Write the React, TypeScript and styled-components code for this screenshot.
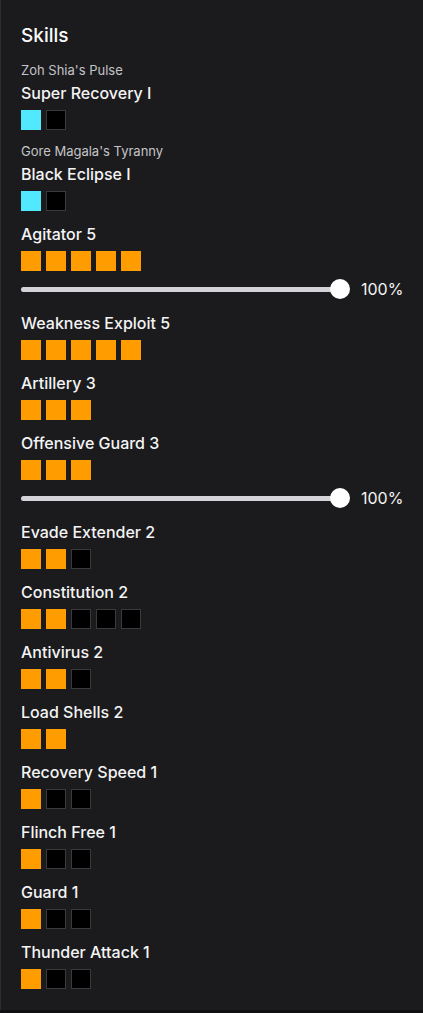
import styled, { createGlobalStyle } from 'styled-components';

type Skill = {
  source?: string;
  name: string;
  filled: number;
  total: number;
  kind: 'set' | 'normal';
  slider?: number;
};

const skills: Skill[] = [
  { source: "Zoh Shia's Pulse", name: 'Super Recovery I', filled: 1, total: 2, kind: 'set' },
  { source: "Gore Magala's Tyranny", name: 'Black Eclipse I', filled: 1, total: 2, kind: 'set' },
  { name: 'Agitator 5', filled: 5, total: 5, kind: 'normal', slider: 100 },
  { name: 'Weakness Exploit 5', filled: 5, total: 5, kind: 'normal' },
  { name: 'Artillery 3', filled: 3, total: 3, kind: 'normal' },
  { name: 'Offensive Guard 3', filled: 3, total: 3, kind: 'normal', slider: 100 },
  { name: 'Evade Extender 2', filled: 2, total: 3, kind: 'normal' },
  { name: 'Constitution 2', filled: 2, total: 5, kind: 'normal' },
  { name: 'Antivirus 2', filled: 2, total: 3, kind: 'normal' },
  { name: 'Load Shells 2', filled: 2, total: 2, kind: 'normal' },
  { name: 'Recovery Speed 1', filled: 1, total: 3, kind: 'normal' },
  { name: 'Flinch Free 1', filled: 1, total: 3, kind: 'normal' },
  { name: 'Guard 1', filled: 1, total: 3, kind: 'normal' },
  { name: 'Thunder Attack 1', filled: 1, total: 3, kind: 'normal' },
];

const App = () => {
  return (
    <>
      <GlobalStyle />
      <Panel>
        <Title>Skills</Title>
        <SkillList>
          {skills.map((skill) => (
            <SkillBlock key={skill.name}>
              <LabelGroup>
                {skill.source && <Source>{skill.source}</Source>}
                <Name>{skill.name}</Name>
              </LabelGroup>
              <Levels>
                {Array.from({ length: skill.total }).map((_, i) => (
                  <Level key={i} $state={i < skill.filled ? skill.kind : 'empty'} />
                ))}
              </Levels>
              {skill.slider !== undefined && (
                <SliderRow>
                  <Track>
                    <Fill style={{ width: `${skill.slider}%` }} />
                    <Thumb />
                  </Track>
                  <Percent>{skill.slider}%</Percent>
                </SliderRow>
              )}
            </SkillBlock>
          ))}
        </SkillList>
      </Panel>
    </>
  );
};

const GlobalStyle = createGlobalStyle`
  body {
    margin: 0;
    background: #101012;
    font-family: Inter, 'Noto Sans', sans-serif;
    color: #f4f4f5;
  }
`;

const Panel = styled.div`
  box-sizing: border-box;
  width: 423px;
  height: 1010px;
  padding: 25px 20px 20px 20px;
  background: #1b1b1d;
  border-left: 1px solid #2c2c2f;
  display: flex;
  flex-direction: column;
`;

const Title = styled.h2`
  margin: 0 0 15px 0;
  font-size: 19px;
  line-height: 22px;
  font-weight: 500;
  color: #fafafa;
`;

const SkillList = styled.div`
  display: flex;
  flex-direction: column;
  gap: 13px;
`;

const SkillBlock = styled.div`
  display: flex;
  flex-direction: column;
  gap: 7px;
`;

const LabelGroup = styled.div`
  display: flex;
  flex-direction: column;
  gap: 4px;
`;

const Source = styled.div`
  font-size: 13px;
  line-height: 17px;
  color: #c4c4c8;
`;

const Name = styled.div`
  font-size: 16px;
  line-height: 20px;
  font-weight: 500;
  color: #f4f4f5;
`;

const Levels = styled.div`
  display: flex;
  gap: 5px;
`;

const levelColors = {
  set: '#52e8ff',
  normal: '#ff9c00',
  empty: '#000000',
};

const Level = styled.div<{ $state: 'set' | 'normal' | 'empty' }>`
  box-sizing: border-box;
  width: 20px;
  height: 20px;
  background: ${(p) => levelColors[p.$state]};
  border: ${(p) => (p.$state === 'empty' ? '1px solid #3a3a3d' : 'none')};
`;

const SliderRow = styled.div`
  display: flex;
  align-items: center;
  height: 22px;
`;

const Track = styled.div`
  position: relative;
  flex: 0 0 319px;
  height: 5px;
  border-radius: 3px;
  background: #3f3f46;
`;

const Fill = styled.div`
  height: 100%;
  border-radius: 3px;
  background: #d4d4d8;
`;

const Thumb = styled.div`
  position: absolute;
  right: -10px;
  top: 50%;
  width: 20px;
  height: 20px;
  margin-top: -10px;
  border-radius: 50%;
  background: #ffffff;
`;

const Percent = styled.span`
  font-size: 16px;
  line-height: 20px;
  color: #f4f4f5;
  margin-left: 21px;
`;

export default App;
